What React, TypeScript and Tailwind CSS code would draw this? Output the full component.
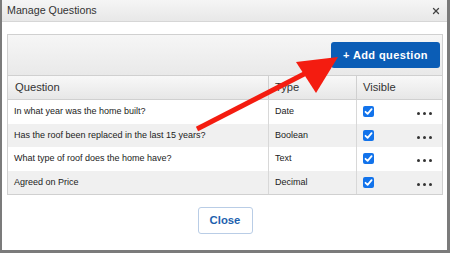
import { X } from "lucide-react";

const rows = [
  { q: "In what year was the home built?", type: "Date" },
  { q: "Has the roof been replaced in the last 15 years?", type: "Boolean" },
  { q: "What type of roof does the home have?", type: "Text" },
  { q: "Agreed on Price", type: "Decimal" },
];

const Checkbox = () => (
  <svg width="11" height="11" viewBox="0 0 11 11">
    <rect x="0" y="0" width="11" height="11" rx="2" fill="#1273eb" />
    <path d="M2.5 5.8 L4.6 7.8 L8.6 3.2" stroke="#fff" strokeWidth="1.8" fill="none" strokeLinecap="round" strokeLinejoin="round" />
  </svg>
);

const Dots = () => (
  <div className="flex gap-[3px]">
    <span className="w-[3px] h-[3px] rounded-full bg-[#333]" />
    <span className="w-[3px] h-[3px] rounded-full bg-[#333]" />
    <span className="w-[3px] h-[3px] rounded-full bg-[#333]" />
  </div>
);

export default function App() {
  return (
    <div
      className="relative w-[450px] h-[253px] overflow-hidden bg-white border-l-2 border-r-[3px] border-b-[3px] border-[#7b7b7b] flex flex-col"
      style={{ fontFamily: '"Liberation Sans", Arial, sans-serif' }}
    >
      {/* header */}
      <div className="h-[22px] flex items-center justify-between pl-[5px] pr-[6px] bg-gradient-to-b from-[#f5f5f5] to-[#e8e8e8] border-b border-[#d6d6d6]">
        <span className="text-[10.7px] text-[#333]">Manage Questions</span>
        <X size={10} strokeWidth={3} className="text-[#444]" />
      </div>

      {/* body */}
      <div className="flex flex-col pt-[12px] pl-[5px] pr-[4px]">
        <div className="border border-[#d0d0d0]">
          <div className="h-[41px] flex justify-end items-start pt-[7px] pr-[2px] bg-gradient-to-b from-[#f6f6f6] to-[#e9e9e9] border-b border-[#d0d0d0]">
            <button className="w-[109px] h-[26px] rounded-[3px] bg-[#0b5db6] text-white text-[11px] font-bold tracking-[0.4px]">
              + Add question
            </button>
          </div>
          <div className="grid grid-cols-[261px_88px_1fr]">
            <div className="h-[24px] flex items-center pl-[7px] text-[11.2px] text-[#333] bg-gradient-to-b from-[#f8f8f8] to-[#e7e7e7] border-r border-b border-[#d0d0d0]">
              Question
            </div>
            <div className="h-[24px] flex items-center pl-[6px] text-[11.2px] text-[#333] bg-gradient-to-b from-[#f8f8f8] to-[#e7e7e7] border-r border-b border-[#d0d0d0]">
              Type
            </div>
            <div className="h-[24px] flex items-center pl-[6px] text-[11.2px] text-[#333] bg-gradient-to-b from-[#f8f8f8] to-[#e7e7e7] border-b border-[#d0d0d0]">
              Visible
            </div>
            {rows.map((r, i) => {
              const bg = i % 2 === 1 ? "bg-[#f0f0f0]" : "bg-white";
              return (
                <div key={i} className="contents">
                  <div className={`h-[23.5px] flex items-center pl-[6px] text-[9px] text-[#222] border-r border-[#d8d8d8] ${bg}`}>
                    {r.q}
                  </div>
                  <div className={`h-[23.5px] flex items-center pl-[6px] text-[9px] text-[#222] border-r border-[#d8d8d8] ${bg}`}>
                    {r.type}
                  </div>
                  <div className={`h-[23.5px] flex items-center justify-between pl-[6px] pr-[10px] ${bg}`}>
                    <Checkbox />
                    <div className="pt-[4px]">
                      <Dots />
                    </div>
                  </div>
                </div>
              );
            })}
          </div>
        </div>

        <div className="flex justify-center mt-[12px]">
          <button className="w-[55px] h-[27px] rounded-[3px] border border-[#b9cde6] bg-white text-[11.3px] font-bold text-[#1d5fae]">
            Close
          </button>
        </div>
      </div>

      {/* red annotation arrow */}
      <svg className="absolute left-[-2px] top-0 pointer-events-none" width="450" height="253">
        <line x1="197" y1="129" x2="308" y2="72" stroke="#f41c10" strokeWidth="5" />
        <polygon points="296,62 338,57 316,93" fill="#f41c10" />
      </svg>
    </div>
  );
}
